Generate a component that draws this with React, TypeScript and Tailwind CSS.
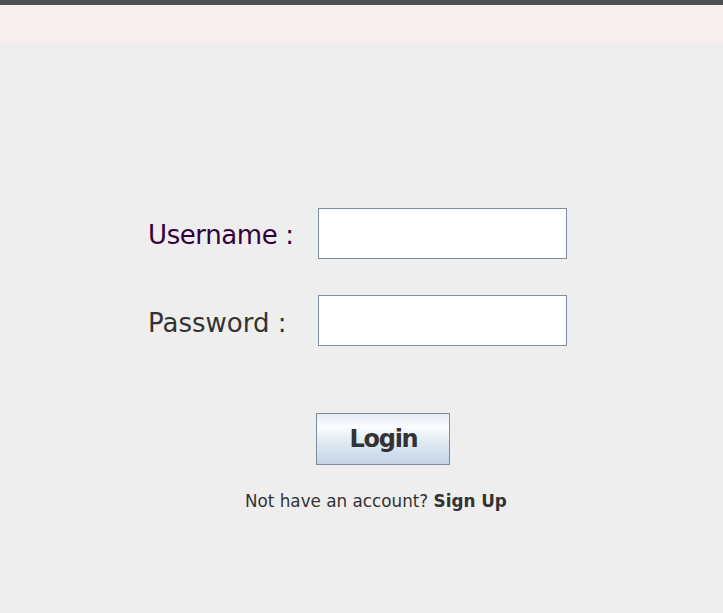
import React from "react";

export default function App() {
  const font = { fontFamily: '"DejaVu Sans", "Liberation Sans", sans-serif' };
  return (
    <div className="w-[723px] h-[613px] bg-[#eeeeee] flex flex-col overflow-hidden" style={font}>
      <div className="h-[5px] bg-[#4b5053] shrink-0" />
      <div className="h-[37px] bg-[#f9eeee] shrink-0" />
      <div className="flex flex-col pt-[166px]">
        <div className="flex items-center pl-[148px] h-[51px]">
          <span className="w-[170px] text-[26px] tracking-[-0.4px] text-[#33003f] leading-none pt-[3px]">Username :</span>
          <div className="w-[249px] h-[51px] bg-white border border-[#7e8e9e]" />
        </div>
        <div className="flex items-center pl-[148px] h-[51px] mt-[36px]">
          <span className="w-[170px] text-[26px] text-[#333333] leading-none pt-[5px]">Password :</span>
          <div className="w-[249px] h-[51px] bg-white border border-[#7e8e9e]" />
        </div>
        <div className="pl-[316px] mt-[67px]">
          <button className="w-[134px] h-[52px] border border-[#7f8d9b] bg-[linear-gradient(to_bottom,#e3ebf4_0%,#fbfcfe_25%,#e6eef6_50%,#c2d4e7_100%)] text-[24px] tracking-[-1.3px] font-bold text-[#333333] flex items-center justify-center leading-none pl-[1px]">
            Login
          </button>
        </div>
        <div className="pl-[245px] mt-[28px] text-[16.8px] text-[#333333] leading-none">
          Not have an account? <span className="font-bold">Sign Up</span>
        </div>
      </div>
    </div>
  );
}
